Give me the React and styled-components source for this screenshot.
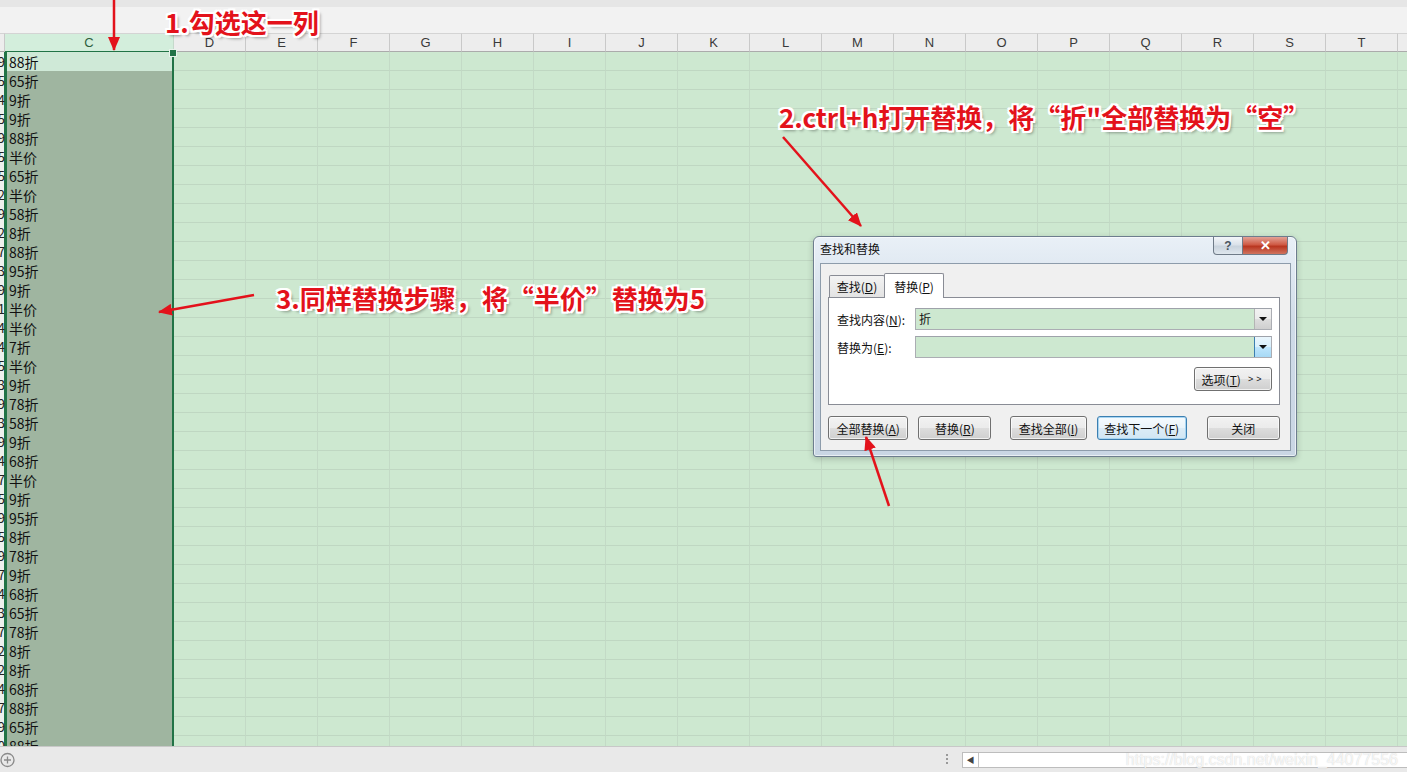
import React from "react";
import styled, { createGlobalStyle } from "styled-components";

const COLUMNS = ["D", "E", "F", "G", "H", "I", "J", "K", "L", "M", "N", "O", "P", "Q", "R", "S", "T", "U"];

const discounts = [
  "88折", "65折", "9折", "9折", "88折", "半价", "65折", "半价", "58折", "8折",
  "88折", "95折", "9折", "半价", "半价", "7折", "半价", "9折", "78折", "58折",
  "9折", "68折", "半价", "9折", "95折", "8折", "78折", "9折", "68折", "65折",
  "78折", "8折", "8折", "68折", "88折", "65折", "88折",
];

const sideDigits = [
  "9", "5", "4", "5", "9", "5", "5", "2", "9", "2", "7", "3", "9", "1", "4",
  "4", "5", "3", "9", "3", "9", "4", "7", "5", "9", "5", "9", "7", "4", "3",
  "7", "2", "2", "4", "7", "9", "0",
];

const GlobalStyle = createGlobalStyle`
  html, body {
    margin: 0;
    padding: 0;
  }
  body {
    width: 1407px;
    height: 772px;
    overflow: hidden;
    font-family: "Noto Sans CJK SC", "Liberation Sans", sans-serif;
  }
`;

const Screen = styled.div`
  position: relative;
  width: 1407px;
  height: 772px;
  display: flex;
  flex-direction: column;
  overflow: hidden;
  background: #f2f2f2;
`;

const TopStrip = styled.div`
  flex: none;
  height: 33px;
  background: linear-gradient(#e6e6e6 0 7px, #f2f2f2 7px);
`;

const Sheet = styled.div`
  flex: 1;
  overflow: hidden;
  display: grid;
  grid-template-columns: 5px 169px repeat(18, 72px);
  grid-auto-rows: 19px;
  align-content: start;
  background: #cde8d0;
`;

const HeadCell = styled.div`
  box-sizing: border-box;
  display: flex;
  align-items: center;
  justify-content: center;
  font-family: "Liberation Sans", sans-serif;
  font-size: 13px;
  color: ${(p) => (p.$active ? "#2d5f3c" : "#3a3a3a")};
  background: ${(p) => (p.$active ? "#d3eedc" : "#ededed")};
  border-top: 1px solid #d4d4d4;
  border-right: 1px solid ${(p) => (p.$active ? "#c5d9cb" : "#c9c9c9")};
  border-bottom: 1px solid ${(p) => (p.$active ? "#217346" : "#ababab")};
`;

const SideCell = styled.div`
  display: flex;
  justify-content: flex-end;
  align-items: center;
  overflow: hidden;
  background: #eef1ee;
  font-size: 13px;
  color: #222;
  box-shadow: inset -1px 0 #217346;
`;

const SelectedCell = styled.div`
  position: relative;
  box-sizing: border-box;
  display: flex;
  align-items: center;
  padding-left: 2px;
  font-size: 14px;
  color: #111;
  background: ${(p) => (p.$current ? "#cfe9d7" : "#9fb5a0")};
  border-left: 2px solid #217346;
  border-right: 2px solid #217346;

  ${(p) =>
    p.$current &&
    `
    &::after {
      content: "";
      position: absolute;
      right: -5px;
      top: -3px;
      width: 6px;
      height: 6px;
      background: #217346;
      border: 1px solid #e8f3eb;
    }
  `}
`;

const GridCell = styled.div`
  border-right: 1px solid #c3dac6;
  border-bottom: 1px solid #bfd7c2;
`;

const BottomBar = styled.div`
  flex: none;
  height: 26px;
  display: flex;
  align-items: center;
  background: #e9e9e9;
  border-top: 1px solid #c8c8c8;
  box-sizing: border-box;
`;

const AddSheet = styled.div`
  width: 16px;
  height: 16px;
  display: flex;
  align-items: center;
`;

const Spacer = styled.div`
  flex: 1;
`;

const Grip = styled.div`
  width: 2px;
  height: 11px;
  margin-right: 14px;
  background: repeating-linear-gradient(#9a9a9a 0 2px, transparent 2px 4px);
`;

const HScroll = styled.div`
  width: 445px;
  height: 16px;
  display: flex;
  background: #fff;
  border: 1px solid #bdbdbd;
  border-right: none;
  box-sizing: border-box;
`;

const ScrollArrow = styled.div`
  width: 15px;
  display: flex;
  align-items: center;
  justify-content: center;
  border-right: 1px solid #c4c4c4;
  font-size: 8px;
  color: #444;
`;

/* ---------- dialog ---------- */

const Dialog = styled.div`
  position: absolute;
  left: 813px;
  top: 236px;
  width: 484px;
  height: 221px;
  box-sizing: border-box;
  display: flex;
  flex-direction: column;
  padding: 0 5px 5px 6px;
  background: linear-gradient(#e9f0f7, #cfdbe8 40%, #c9d6e4);
  border: 1px solid #6d7d8e;
  border-radius: 6px 6px 3px 3px;
  box-shadow: inset 0 0 0 1px rgba(255, 255, 255, 0.6), 0 2px 6px rgba(0, 0, 0, 0.2);
  font-size: 12px;
  color: #111;
`;

const TitleBar = styled.div`
  height: 26px;
  display: flex;
  justify-content: space-between;
  align-items: flex-start;
`;

const Title = styled.div`
  padding-top: 3px;
  font-size: 12px;
`;

const Captions = styled.div`
  display: flex;
  margin-right: 3px;
`;

const CaptionButton = styled.div`
  width: ${(p) => p.$w}px;
  height: 18px;
  display: flex;
  align-items: center;
  justify-content: center;
  box-sizing: border-box;
  border: 1px solid #6f7b88;
  border-top: none;
  border-radius: ${(p) => (p.$close ? "0 0 4px 0" : "0 0 0 4px")};
  border-left: ${(p) => (p.$close ? "none" : "1px solid #6f7b88")};
  background: ${(p) =>
    p.$close
      ? "linear-gradient(#e3a296, #cf5a45 45%, #b93620 55%, #d0745f)"
      : "linear-gradient(#f3f6f9, #dbe2ea 45%, #c9d3dd 55%, #dfe7ee)"};
  color: ${(p) => (p.$close ? "#fff" : "#4a5561")};
  font-family: "Liberation Sans", sans-serif;
  font-weight: 700;
  font-size: ${(p) => (p.$close ? "13px" : "12px")};
`;

const Client = styled.div`
  flex: 1;
  box-sizing: border-box;
  background: #f0f0f0;
  border: 1px solid #8d9cab;
  padding: 9px 10px 0 7px;
  display: flex;
  flex-direction: column;
`;

const TabStrip = styled.div`
  height: 24px;
  display: flex;
  align-items: flex-end;
`;

const Tab = styled.div`
  position: relative;
  z-index: ${(p) => (p.$active ? 2 : 1)};
  box-sizing: border-box;
  width: ${(p) => (p.$active ? 60 : 56)}px;
  height: ${(p) => (p.$active ? 25 : 22)}px;
  margin-bottom: ${(p) => (p.$active ? -1 : 0)}px;
  margin-left: ${(p) => (p.$active ? -1 : 1)}px;
  display: flex;
  align-items: center;
  justify-content: center;
  border: 1px solid #898c95;
  border-bottom: none;
  border-radius: 2px 2px 0 0;
  background: ${(p) => (p.$active ? "#fff" : "linear-gradient(#f3f3f3, #e3e3e3)")};
  font-size: 12px;
`;

const TabPanel = styled.div`
  height: 108px;
  box-sizing: border-box;
  background: #fff;
  border: 1px solid #898c95;
  padding: 10px 7px 0 8px;
  display: grid;
  grid-template-columns: 78px 1fr;
  grid-auto-rows: 22px;
  row-gap: 6px;
  align-items: center;
`;

const FieldLabel = styled.div`
  font-size: 12px;
`;

const Combo = styled.div`
  height: 22px;
  box-sizing: border-box;
  display: flex;
  background: #cde8d0;
  border: 1px solid #abadb3;
  border-top-color: #9ea2aa;
`;

const ComboText = styled.div`
  flex: 1;
  padding-left: 3px;
  font-size: 12px;
  line-height: 20px;
`;

const ComboDrop = styled.div`
  width: 16px;
  display: flex;
  align-items: center;
  justify-content: center;
  border-left: 1px solid ${(p) => (p.$hover ? "#3c7fb1" : "#b4b4b4")};
  background: ${(p) =>
    p.$hover
      ? "linear-gradient(#eaf6fd, #d9f0fc 50%, #bee6fd 51%, #a7d9f5)"
      : "linear-gradient(#f2f2f2, #ebebeb 50%, #dddddd 51%, #cfcfcf)"};

  &::before {
    content: "";
    border-left: 4px solid transparent;
    border-right: 4px solid transparent;
    border-top: 4px solid #111;
  }
`;

const OptionsRow = styled.div`
  grid-column: 1 / -1;
  display: flex;
  justify-content: flex-end;
  margin-top: 8px;
`;

const Button = styled.div`
  box-sizing: border-box;
  width: ${(p) => p.$w}px;
  margin-left: ${(p) => p.$ml || 0}px;
  height: 24px;
  display: flex;
  align-items: center;
  justify-content: center;
  gap: 7px;
  font-size: 12px;
  border: 1px solid ${(p) => (p.$focus ? "#3c7fb1" : "#707070")};
  border-radius: 3px;
  background: ${(p) =>
    p.$focus
      ? "linear-gradient(#f6fbfe, #eaf4fa 50%, #dcecf7 51%, #d1e6f3)"
      : "linear-gradient(#f2f2f2, #ebebeb 50%, #dddddd 51%, #cfcfcf)"};
  box-shadow: inset 0 0 0 1px ${(p) => (p.$focus ? "#a8d5f2" : "rgba(255,255,255,0.7)")};
`;

const Chevrons = styled.span`
  font-family: "Liberation Sans", sans-serif;
  font-size: 9px;
  letter-spacing: 3px;
`;

const ButtonRow = styled.div`
  display: flex;
  margin-top: 11px;
`;

/* ---------- annotations ---------- */

const Note = styled.div`
  position: absolute;
  left: ${(p) => p.$x}px;
  top: ${(p) => p.$y}px;
  white-space: nowrap;
  font-family: "Noto Sans CJK SC", sans-serif;
  font-weight: 700;
  font-size: 26px;
  line-height: 26px;
  color: #e3121b;
  text-shadow:
    -2px -2px 0 #fff, 2px -2px 0 #fff, -2px 2px 0 #fff, 2px 2px 0 #fff,
    0 -2px 0 #fff, 0 2px 0 #fff, -2px 0 0 #fff, 2px 0 0 #fff,
    3px 3px 3px rgba(0, 0, 0, 0.35);
`;

const Arrows = styled.svg`
  position: absolute;
  left: 0;
  top: 0;
  pointer-events: none;
`;

const Watermark = styled.div`
  position: absolute;
  right: 9px;
  bottom: 3px;
  font-family: "Liberation Sans", sans-serif;
  font-size: 16px;
  color: rgba(255, 255, 255, 0.8);
  text-shadow: 0 0 1px rgba(120, 120, 120, 0.4);
`;

const Key = ({ children }) => <u>{children}</u>;

const arrows = [
  [114, 0, 114, 50],
  [783, 137, 861, 226],
  [254, 295, 159, 312],
  [889, 506, 866, 437],
];

const App = () => {
  return (
    <Screen>
      <GlobalStyle />
      <TopStrip />
      <Sheet>
        <HeadCell />
        <HeadCell $active>C</HeadCell>
        {COLUMNS.map((c) => (
          <HeadCell key={c}>{c}</HeadCell>
        ))}
        {discounts.map((d, i) => (
          <React.Fragment key={i}>
            <SideCell>{sideDigits[i]}</SideCell>
            <SelectedCell $current={i === 0}>{d}</SelectedCell>
            {COLUMNS.map((c) => (
              <GridCell key={c} />
            ))}
          </React.Fragment>
        ))}
      </Sheet>
      <BottomBar>
        <AddSheet>
          <svg width="16" height="16" viewBox="0 0 16 16">
            <circle cx="7.5" cy="8" r="6.5" fill="none" stroke="#8a8a8a" strokeWidth="1.3" />
            <path d="M7.5 4.5v7M4 8h7" stroke="#8a8a8a" strokeWidth="1.3" />
          </svg>
        </AddSheet>
        <Spacer />
        <Grip />
        <HScroll>
          <ScrollArrow>◀</ScrollArrow>
        </HScroll>
      </BottomBar>

      <Dialog>
        <TitleBar>
          <Title>查找和替换</Title>
          <Captions>
            <CaptionButton $w={30}>?</CaptionButton>
            <CaptionButton $w={45} $close>
              ✕
            </CaptionButton>
          </Captions>
        </TitleBar>
        <Client>
          <TabStrip>
            <Tab>
              <span>
                查找(<Key>D</Key>)
              </span>
            </Tab>
            <Tab $active>
              <span>
                替换(<Key>P</Key>)
              </span>
            </Tab>
          </TabStrip>
          <TabPanel>
            <FieldLabel>
              查找内容(<Key>N</Key>):
            </FieldLabel>
            <Combo>
              <ComboText>折</ComboText>
              <ComboDrop />
            </Combo>
            <FieldLabel>
              替换为(<Key>E</Key>):
            </FieldLabel>
            <Combo>
              <ComboText />
              <ComboDrop $hover />
            </Combo>
            <OptionsRow>
              <Button $w={78}>
                <span>
                  选项(<Key>T</Key>)
                </span>
                <Chevrons>&gt;&gt;</Chevrons>
              </Button>
            </OptionsRow>
          </TabPanel>
          <ButtonRow>
            <Button $w={81}>
              <span>
                全部替换(<Key>A</Key>)
              </span>
            </Button>
            <Button $w={74} $ml={10}>
              <span>
                替换(<Key>R</Key>)
              </span>
            </Button>
            <Button $w={77} $ml={19}>
              <span>
                查找全部(<Key>I</Key>)
              </span>
            </Button>
            <Button $w={91} $ml={10} $focus>
              <span>
                查找下一个(<Key>F</Key>)
              </span>
            </Button>
            <Button $w={74} $ml={20}>
              <span>关闭</span>
            </Button>
          </ButtonRow>
        </Client>
      </Dialog>

      <Note $x={165} $y={9}>1.勾选这一列</Note>
      <Note $x={779} $y={104}>2.ctrl+h打开替换，将“折"全部替换为“空”</Note>
      <Note $x={276} $y={285}>3.同样替换步骤，将“半价”替换为5</Note>

      <Arrows width="1407" height="772">
        <defs>
          <marker
            id="head"
            markerUnits="userSpaceOnUse"
            markerWidth="14"
            markerHeight="12"
            refX="13"
            refY="6"
            orient="auto"
          >
            <path d="M0 0L14 6L0 12z" fill="#e3121b" />
          </marker>
        </defs>
        {arrows.map(([x1, y1, x2, y2], i) => (
          <line
            key={i}
            x1={x1}
            y1={y1}
            x2={x2}
            y2={y2}
            stroke="#e3121b"
            strokeWidth="2.5"
            markerEnd="url(#head)"
          />
        ))}
      </Arrows>

      <Watermark>https://blog.csdn.net/weixin_44077556</Watermark>
    </Screen>
  );
};

export default App;
